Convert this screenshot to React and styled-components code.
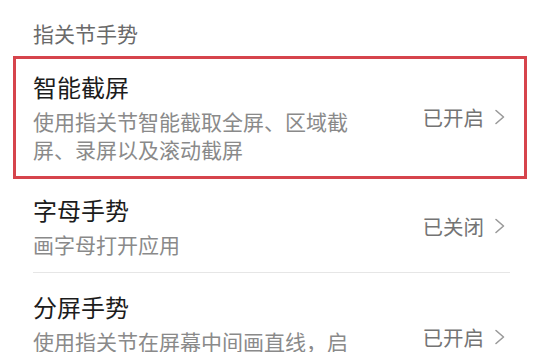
import React from 'react';
import styled, { createGlobalStyle } from 'styled-components';

const GlobalStyle = createGlobalStyle`
  html, body {
    margin: 0;
    padding: 0;
    background: #ffffff;
  }
  body {
    font-family: "Noto Sans CJK SC", "Noto Sans", sans-serif;
    -webkit-font-smoothing: antialiased;
  }
`;

const Page = styled.div`
  width: 534px;
  height: 352px;
  overflow: hidden;
  background: #ffffff;
`;

const SectionTitle = styled.div`
  padding: 19px 33px 0;
  margin-bottom: 8px;
  font-size: 21px;
  line-height: 29px;
  color: #6a6a6a;
`;

const List = styled.div`
  display: flex;
  flex-direction: column;
  padding: 0 7px 0 13px;
`;

const Row = styled.div`
  border: 3px solid ${(props) => (props.highlight ? '#d6444c' : 'transparent')};
  padding: 0 14px 0 17px;
`;

const RowInner = styled.div`
  display: flex;
  align-items: center;
  gap: 16px;
  padding: 12px 0 ${(props) => (props.divider ? '14px' : '12px')};
  border-bottom: 1px solid ${(props) => (props.divider ? '#e6e6e6' : 'transparent')};
`;

const TextBlock = styled.div`
  flex: 1;
  display: flex;
  flex-direction: column;
  gap: 4px;
  min-width: 0;
`;

const Title = styled.div`
  font-size: 24px;
  line-height: 32px;
  color: #1c1c1c;
`;

const Desc = styled.div`
  font-size: 21px;
  line-height: 28px;
  color: #8a8a8a;
  max-width: 330px;
`;

const Status = styled.div`
  display: flex;
  align-items: center;
  gap: 10px;
  margin-right: 4px;
  font-size: 20.5px;
  color: #747474;
  white-space: nowrap;
`;

const Chevron = () => (
  <svg width="12" height="16" viewBox="0 0 12 16" fill="none">
    <polyline
      points="2,1.5 9.5,8 2,14.5"
      stroke="#9a9a9a"
      strokeWidth="1.6"
      strokeLinecap="round"
      strokeLinejoin="round"
    />
  </svg>
);

const items = [
  {
    title: '智能截屏',
    desc: '使用指关节智能截取全屏、区域截屏、录屏以及滚动截屏',
    status: '已开启',
    highlight: true,
  },
  { title: '字母手势', desc: '画字母打开应用', status: '已关闭', divider: true },
  {
    title: '分屏手势',
    desc: '使用指关节在屏幕中间画直线，启动分屏',
    status: '已开启',
    divider: true,
  },
];

export default function App() {
  return (
    <Page>
      <GlobalStyle />
      <SectionTitle>指关节手势</SectionTitle>
      <List>
        {items.map((item) => (
          <Row key={item.title} highlight={item.highlight}>
            <RowInner divider={item.divider}>
              <TextBlock>
                <Title>{item.title}</Title>
                <Desc>{item.desc}</Desc>
              </TextBlock>
              <Status>
                {item.status}
                <Chevron />
              </Status>
            </RowInner>
          </Row>
        ))}
      </List>
    </Page>
  );
}
